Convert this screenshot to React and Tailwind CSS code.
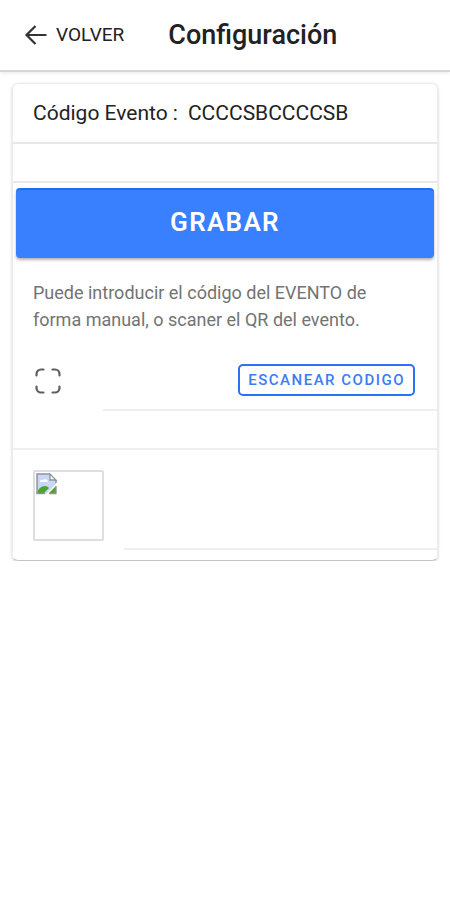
import React, { useState } from 'react';

const BackArrow = () => (
  <svg className="h-6 w-6" viewBox="0 0 24 24" fill="none" stroke="#333" strokeWidth="2.2" aria-hidden="true">
    <path d="M11.500 3L2.500 12l9 9M2.500 12H22.500" />
  </svg>
);

const ScanIcon = () => (
  <svg
    className="h-[30px] w-[30px]"
    viewBox="0 0 30 30"
    fill="none"
    stroke="#5f5f5f"
    strokeWidth="2.2"
    strokeLinecap="round"
    aria-hidden="true"
  >
    <path d="M3.500 9.500V8a4.500 4.500 0 0 1 4.500-4.500h2.500M19.500 3.500H22a4.500 4.500 0 0 1 4.500 4.500v1.500M26.500 20.500V22a4.500 4.500 0 0 1-4.500 4.500h-2.500M10.500 26.500H8A4.500 4.500 0 0 1 3.500 22v-1.500" />
  </svg>
);

const MissingImage = () => (
  <svg className="h-6 w-6" viewBox="0 0 24 24" role="img" aria-label="Imagen no disponible">
    <path d="M2 2h13l6 6v4L11 22H2z" fill="#c8d8f4" />
    <path d="M5 10a2 2 0 0 1 3-2 3 3 0 0 1 5 2z" fill="#fff" />
    <path d="M2 21c1-4 4-7 8-7 2 0 3 1 4 2l-5 5z" fill="#4ba52d" />
    <path d="M15 2v6h6z" fill="#fff" stroke="#8d949c" strokeWidth="1.300" />
    <path d="M21 8v3M10 21.500H2V2h13" fill="none" stroke="#8d949c" strokeWidth="1.500" />
    <path d="M21 14v7h-7z" fill="#4ba52d" />
    <path d="M21 14v7.500h-7" fill="none" stroke="#8d949c" strokeWidth="1.300" />
  </svg>
);

const Header = () => (
  <header className="flex h-[72px] items-center border-b-2 border-[#d6d6d6] px-6 shadow-[0_2px_3px_rgba(0,0,0,0.06)]">
    <button type="button" className="flex items-center gap-2 text-[19px] text-[#222]">
      <BackArrow />
      VOLVER
    </button>
    <h1 className="ml-11 text-[27px] font-medium text-[#222]">Configuración</h1>
  </header>
);

const App = () => {
  const [code, setCode] = useState('CCCCSBCCCCSB');

  return (
    <div className="bg-white font-[Roboto,sans-serif]">
      <Header />

      <main className="px-3 pt-[11px]">
        <section className="rounded-md border border-[#ebebeb] border-b-[#c4c4c4] shadow-[0_1px_3px_rgba(0,0,0,0.2)]">
          <div className="flex h-[60px] items-center gap-2.5 border-b-2 border-[#e8e8e8] px-5 pt-0.5 text-[21px] text-[#222]">
            <label htmlFor="codigo" className="shrink-0">
              Código Evento :
            </label>
            <input
              id="codigo"
              type="text"
              className="min-w-0 flex-1 outline-none"
              value={code}
              onChange={(e) => setCode(e.target.value)}
            />
          </div>
          <div className="h-[39px] border-b-2 border-[#e8e8e8]" />

          <div className="px-[3px] pt-[5px]">
            <button
              type="button"
              className="h-[70px] w-full rounded-[4px] border-t-2 border-[#1c70f0] bg-[#3880ff] pb-1 text-[26px] font-semibold tracking-wider text-white shadow-[0_2px_3px_rgba(0,0,0,0.3)]"
            >
              GRABAR
            </button>
          </div>

          <p className="px-5 pt-[21px] pr-12 text-[18px] leading-[27px] text-[#737373]">
            Puede introducir el código del EVENTO de forma manual, o scaner el QR del evento.
          </p>

          {/* Scan row, the divider starts after the icon */}
          <div className="flex h-[78px] pl-5">
            <div className="flex w-[70px] shrink-0 items-center pt-[18px]">
              <ScanIcon />
            </div>
            <div className="flex flex-1 items-center justify-end border-b-2 border-[#efefef] pr-[22px] pt-[18px]">
              <button
                type="button"
                className="h-8 rounded-[5px] border-2 border-[#2a72f5] px-2 text-[15px] font-medium tracking-widest text-[#3b7cf5]"
              >
                ESCANEAR CODIGO
              </button>
            </div>
          </div>
          <div className="h-[39px] border-b-2 border-[#efefef]" />

          <div className="mb-[10px] flex h-[100px] pl-5">
            <div className="mt-5 mr-5 h-[71px] w-[71px] shrink-0 rounded-[2px] border-2 border-[#dedede]">
              <MissingImage />
            </div>
            <div className="flex-1 border-b-2 border-[#efefef]" />
          </div>
        </section>
      </main>
    </div>
  );
};

export default App;
